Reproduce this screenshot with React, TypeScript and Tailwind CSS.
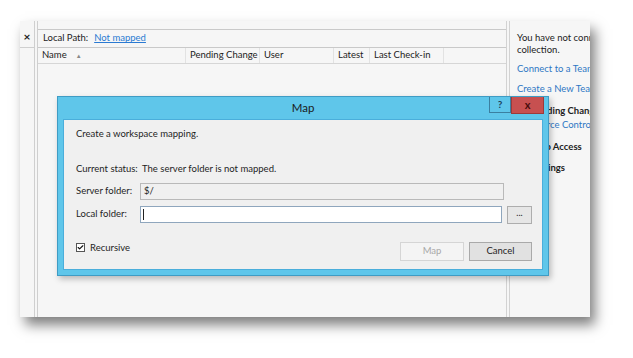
import { Check } from 'lucide-react';

const font = { fontFamily: 'Lato, "Noto Sans", sans-serif' };

function HeaderCell({ label, w, last }: { label: React.ReactNode; w: string; last?: boolean }) {
  return (
    <div
      className={`${w} flex items-center px-[4px] h-full overflow-hidden whitespace-nowrap ${last ? '' : 'border-r border-[#e2e2e2]'}`}
    >
      {label}
    </div>
  );
}

function SourcePanel() {
  return (
    <div className="flex h-[296px] w-[570px] bg-[#f6f6f6] shadow-[5px_8px_12px_rgba(0,0,0,0.5)]">
      {/* tab close strip */}
      <div className="w-[14px] flex flex-col">
        <div className="h-[27px] flex items-center justify-center pt-[6px] border-b border-[#cfcfcf] text-[12px] font-bold text-[#222]">
          ×
        </div>
      </div>
      <div className="w-[4px] h-full border-x border-[#cfcfcf]" />
      {/* main list */}
      <div className="flex-1 flex flex-col pt-[8px]">
        <div className="h-[19px] flex items-center gap-[6px] px-[5px] border-t border-b border-[#c9c9c9] text-[9.5px] text-[#222]">
          <span>Local Path:</span>
          <span className="text-[#2a7ad2] underline">Not mapped</span>
        </div>
        <div className="h-[16px] flex items-center border-b border-[#d6d6d6] text-[9.5px] text-[#222]">
          <HeaderCell
            w="w-[148px]"
            label={
              <>
                <span>Name</span>
                <span className="ml-[9px] text-[6px] text-[#888]">▲</span>
              </>
            }
          />
          <HeaderCell w="w-[74px]" label="Pending Change" />
          <HeaderCell w="w-[74px]" label="User" />
          <HeaderCell w="w-[36px]" label="Latest" />
          <HeaderCell w="w-[74px]" label="Last Check-in" />
        </div>
        <div className="flex-1" />
      </div>
      <div className="w-[4px] h-full border-x border-[#d2d2d2]" />
      {/* team explorer */}
      <div className="w-[80px] overflow-hidden pl-[7px] pt-[11px] text-[9.5px] leading-[12px] whitespace-nowrap">
        <div className="text-[#222]">You have not connected</div>
        <div className="text-[#222]">collection.</div>
        <div className="mt-[7px] text-[#2e77c4]">Connect to a Team Project</div>
        <div className="mt-[8px] text-[#2e77c4]">Create a New Team Project</div>
        <div className="ml-[14px] mt-[10px] font-bold text-[#222]">Pending Changes</div>
        <div className="ml-[14px] mt-[2px] text-[#2e77c4]">Source Control Explorer</div>
        <div className="ml-[14px] mt-[10px] font-bold text-[#222]">Web Access</div>
        <div className="ml-[14px] mt-[9px] font-bold text-[#222]">Settings</div>
      </div>
    </div>
  );
}

function MapDialog() {
  return (
    <div className="absolute left-[57px] top-[96px] w-[492px] h-[180px] flex flex-col bg-[#5fc6ea] border border-[#3f9cc4] shadow-[2px_3px_6px_rgba(0,0,0,0.25)]">
      <div className="relative h-[22px] flex items-center justify-center text-[11.5px] text-[#1b1b1b]">
        Map
        <div className="absolute right-[4px] top-0 flex">
          <div className="w-[22px] h-[16px] flex items-center justify-center border border-[#3b7fa0] border-t-0 text-[10px] font-bold text-[#1c3e5a]">
            ?
          </div>
          <div className="w-[33px] h-[17px] flex items-center justify-center bg-[#c75050] border border-[#9e3a3a] border-t-0 text-[11px] font-bold text-[#4a0c0c]">
            x
          </div>
        </div>
      </div>
      <div className="flex-1 mx-[5px] mb-[5px] bg-[#f0f0f0] border border-[#4aaedb] pl-[12px] pr-[10px] pt-[7px] text-[9.5px] text-[#1e1e1e]">
        <div className="h-[14px] flex items-center">Create a workspace mapping.</div>
        <div className="h-[14px] mt-[21px] flex items-center">
          <span className="w-[66px]">Current status:</span>
          <span>The server folder is not mapped.</span>
        </div>
        <div className="mt-[7px] flex items-center h-[17px]">
          <span className="w-[64px]">Server folder:</span>
          <div className="w-[364px] h-[17px] flex items-center px-[3px] bg-[#f0f0f0] border border-[#b9b9b9]">$/</div>
        </div>
        <div className="mt-[6px] flex items-center h-[17px]">
          <span className="w-[64px]">Local folder:</span>
          <div className="w-[364px] h-[17px] flex items-center px-[2px] bg-white border border-[#8fa6bd]">
            <div className="w-px h-[11px] bg-[#222]" />
          </div>
          <div className="ml-[5px] w-[25px] h-[18px] flex items-center justify-center bg-[#e6e6e6] border border-[#adadad] text-[9px] leading-none pb-[4px]">
            ...
          </div>
        </div>
        <div className="mt-[19px] flex items-start h-[19px]">
          <div className="mt-[1px] w-[9px] h-[9px] flex items-center justify-center bg-white border border-[#555]">
            <Check size={9} strokeWidth={4} className="text-[#111]" />
          </div>
          <span className="ml-[5px] leading-[11px]">Recursive</span>
          <div className="flex-1" />
          <div className="w-[64px] h-[19px] flex items-center justify-center border border-[#d5d5d5] bg-[#f4f4f4] text-[#a8a8a8]">
            Map
          </div>
          <div className="ml-[5px] w-[63px] h-[19px] flex items-center justify-center border border-[#a9a9a9] bg-[#e1e1e1] text-[#1e1e1e]">
            Cancel
          </div>
        </div>
      </div>
    </div>
  );
}

export default function App() {
  return (
    <div className="relative w-[633px] h-[358px] bg-white overflow-hidden" style={font}>
      <div className="pl-[20px] pt-[21px]">
        <SourcePanel />
      </div>
      <MapDialog />
    </div>
  );
}
